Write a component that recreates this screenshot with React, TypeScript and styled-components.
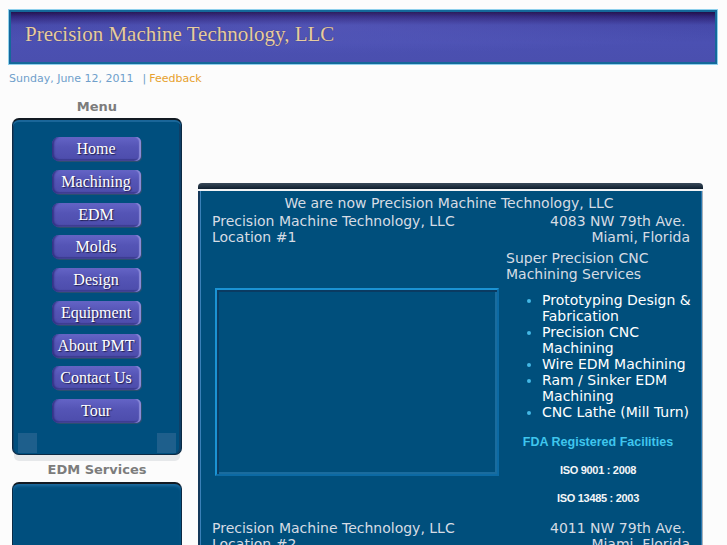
import styled, { createGlobalStyle } from "styled-components";

const GlobalStyle = createGlobalStyle`
  body {
    margin: 0;
    background: #fcfcfc;
    font-family: "DejaVu Sans", Verdana, sans-serif;
  }
`;

const menuItems = [
  "Home",
  "Machining",
  "EDM",
  "Molds",
  "Design",
  "Equipment",
  "About PMT",
  "Contact Us",
  "Tour",
];

const services = [
  "Prototyping Design & Fabrication",
  "Precision CNC Machining",
  "Wire EDM Machining",
  "Ram / Sinker EDM Machining",
  "CNC Lathe (Mill Turn)",
];

export default function App() {
  return (
    <>
      <GlobalStyle />
      <Page>
        <Header>
          <Title>Precision Machine Technology, LLC</Title>
        </Header>
        <DateLine>
          Sunday, June 12, 2011<Sep>|</Sep>
          <Feedback href="#">Feedback</Feedback>
        </DateLine>

        <Columns>
          <Sidebar>
            <SideHeading>Menu</SideHeading>
            <MenuBox>
              {menuItems.map((item) => (
                <MenuButton key={item}>{item}</MenuButton>
              ))}
              <Corners>
                <Corner />
                <Corner />
              </Corners>
            </MenuBox>
            <SideHeading>EDM Services</SideHeading>
            <ServiceBox />
          </Sidebar>

          <Main>
            <PanelTop />
            <Panel>
              <Announce>We are now Precision Machine Technology, LLC</Announce>
              <Grid>
                <Cell>
                  Precision Machine Technology, LLC
                  <br />
                  Location #1
                </Cell>
                <Cell $right>
                  4083 NW 79th Ave.&nbsp;
                  <br />
                  Miami, Florida
                </Cell>

                <Cell>
                  <PhotoFrame />
                </Cell>
                <Cell>
                  Super Precision CNC
                  <br />
                  Machining Services
                  <ServiceList>
                    {services.map((s) => (
                      <li key={s}>{s}</li>
                    ))}
                  </ServiceList>
                  <Fda>FDA Registered Facilities</Fda>
                  <Iso>ISO 9001 : 2008</Iso>
                  <Iso $last>ISO 13485 : 2003</Iso>
                </Cell>

                <Cell>
                  Precision Machine Technology, LLC
                  <br />
                  Location #2
                </Cell>
                <Cell $right>
                  4011 NW 79th Ave.&nbsp;
                  <br />
                  Miami, Florida
                </Cell>
              </Grid>
            </Panel>
          </Main>
        </Columns>
      </Page>
    </>
  );
}

const Page = styled.div`
  height: 545px;
  overflow: hidden;
  padding: 9px 9px 0 8px;
  box-sizing: border-box;
`;

const Header = styled.header`
  height: 56px;
  box-sizing: border-box;
  border: 1px solid #8fd0ec;
  box-shadow: inset 0 0 0 2px #14689a;

  display: flex;
  align-items: center;
  padding-left: 16px;

  background:
    radial-gradient(ellipse 60% 50% at 45% 30%, rgba(110, 110, 210, 0.3), transparent),
    linear-gradient(to bottom, #1c0836 0%, #2e2478 12%, #4448a8 28%, #4b50b2 60%, #4a4fae 100%);
`;

const Title = styled.h1`
  margin: 0 0 5px;
  font-family: "Liberation Serif", "Times New Roman", serif;
  font-weight: 400;
  font-size: 21px;
  color: #e6cca2;
  text-shadow: 0 0 1px rgba(40, 20, 10, 0.5);
`;

const DateLine = styled.div`
  margin-top: 7px;
  height: 14px;
  font-size: 11px;
  line-height: 14px;
  color: #6f9fcb;
  padding-left: 1px;
`;

const Sep = styled.span`
  margin-left: 9px;
  margin-right: 3px;
`;

const Feedback = styled.a`
  color: #e7a12e;
  text-decoration: none;
`;

const Columns = styled.div`
  display: flex;
  align-items: flex-start;
  gap: 16px;
  margin-top: 13px;
`;

const Sidebar = styled.aside`
  width: 174px;
  flex-shrink: 0;
  display: flex;
  flex-direction: column;
  align-items: center;
  padding-left: 4px;
  box-sizing: border-box;
`;

const SideHeading = styled.h3`
  margin: 0;
  height: 16px;
  font-size: 13px;
  font-weight: 700;
  line-height: 16px;
  color: #7c7c7c;
`;

const MenuBox = styled.nav`
  margin-top: 3px;
  width: 170px;
  height: 337px;
  box-sizing: border-box;
  padding-top: 17px;
  border: 1px solid #0b2a44;
  border-top: 2px solid #121a22;
  border-radius: 7px;
  background: #004f7e;
  box-shadow:
    inset 0 2px 0 #1a6699,
    inset 1px 0 0 #0f3f66,
    inset -2px 0 0 #0f3f66,
    0 8px 0 -2px #e6e8ea;

  display: flex;
  flex-direction: column;
  align-items: center;
  gap: 8.75px;
  position: relative;
  margin-bottom: 7px;
`;

const MenuButton = styled.a`
  width: 89px;
  height: 24px;
  flex-shrink: 0;
  box-sizing: border-box;
  border-radius: 7px 5px 5px 7px;
  background: linear-gradient(to bottom, #6464c6 0%, #5555b6 40%, #4c4cab 100%);
  box-shadow:
    inset 3px 0 2px -1px #333385,
    inset -2px 0 1px #8a8ad8,
    inset 0 -2px 1px #3c3c90,
    1px 1px 0 #2b4f70;
  color: #fff;
  font-family: "Liberation Serif", "Times New Roman", serif;
  font-size: 16px;
  line-height: 23px;
  text-align: center;
  text-shadow: 1px 1px 1px #202050;
  cursor: pointer;
  margin-left: -2px;
`;

const Corners = styled.div`
  position: absolute;
  left: 5px;
  right: 5px;
  bottom: 1px;
  display: flex;
  justify-content: space-between;
`;

const Corner = styled.div`
  width: 19px;
  height: 20px;
  background: #1e5f8c;
`;

const ServiceBox = styled.div`
  margin-top: 4px;
  width: 170px;
  height: 80px;
  box-sizing: border-box;
  border: 1px solid #0b2a44;
  border-top: 2px solid #121a22;
  border-radius: 7px 7px 0 0;
  background: #004f7e;
  box-shadow: inset 0 3px 3px -1px #1c6ba0;
`;

const Main = styled.main`
  width: 505px;
  margin-top: 84px;
`;

const PanelTop = styled.div`
  height: 6px;
  border-radius: 4px 4px 0 0;
  background: linear-gradient(to bottom, #3a4a5a, #0e1e2e);
  border-bottom: 2px solid #f2f4f6;
`;

const Panel = styled.section`
  height: 400px;
  box-sizing: border-box;
  background: #004f7c;
  border-left: 2px solid #14385a;
  border-right: 1px solid #a8b0b8;
  box-shadow: inset 1px 0 0 #3a80b8, inset -1px 0 0 #2a78b0;
  padding: 4px 12px 0 12px;
  color: #d6dce4;
  font-size: 14px;
  line-height: 16px;
`;

const Announce = styled.div`
  text-align: center;
  margin-left: -4px;
  margin-bottom: 2px;
`;

const Grid = styled.div`
  display: grid;
  grid-template-columns: 294px 1fr;
  row-gap: 5px;
`;

const Cell = styled.div<{ $right?: boolean }>`
  text-align: ${(p) => (p.$right ? "right" : "left")};
  white-space: nowrap;
`;

const PhotoFrame = styled.div`
  margin: 38px 0 0 3px;
  width: 284px;
  height: 188px;
  box-sizing: border-box;
  border: 2px solid;
  border-color: #1b93d4 #0c6aa4 #0c6aa4 #1b93d4;
  box-shadow: inset 2px 2px 0 #0a3b62, inset -2px -2px 0 #1a6c9e;
`;

const ServiceList = styled.ul`
  margin: 10px -8px 0 0;
  padding-left: 36px;
  color: #fff;
  white-space: normal;

  li::marker {
    color: #44b8e6;
  }
`;

const Fda = styled.div`
  margin-top: 15px;
  text-align: center;
  font-family: "Liberation Sans", Arial, sans-serif;
  font-weight: 700;
  font-size: 12.5px;
  line-height: 14px;
  color: #3fc6ee;
`;

const Iso = styled.div<{ $last?: boolean }>`
  margin-top: 14px;
  margin-bottom: ${(p) => (p.$last ? "10px" : "0")};
  text-align: center;
  font-family: "Liberation Sans", Arial, sans-serif;
  font-weight: 700;
  font-size: 11px;
  line-height: 14px;
  letter-spacing: -0.3px;
  color: #f4f6f8;
`;
